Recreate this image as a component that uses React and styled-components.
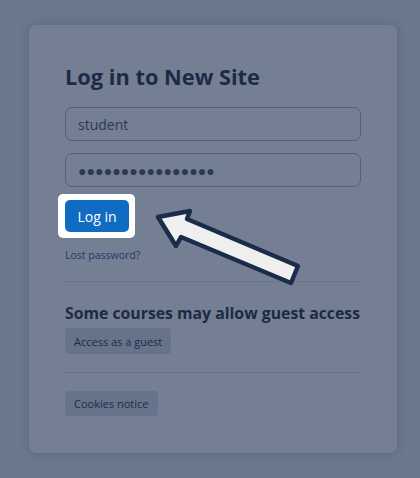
import React from "react";
import styled, { createGlobalStyle } from "styled-components";

const Global = createGlobalStyle`
  html, body { margin: 0; padding: 0; background: #6b798f; }
  body { font-family: "Open Sans", "Noto Sans", sans-serif; }
  * { box-sizing: border-box; }
`;

const Page = styled.div`
  width: 420px;
  height: 478px;
  padding: 25px 23px 0 29px;
  background: #6b798f;
  overflow: hidden;
`;

const Card = styled.div`
  position: relative;
  width: 368px;
  height: 428px;
  background: #747f93;
  border-radius: 7px;
  box-shadow: 0 0 12px rgba(40, 52, 72, 0.25);
  padding: 38px 36px 0 36px;
  display: flex;
  flex-direction: column;
`;

const Title = styled.h1`
  margin: 0 0 17px 0;
  font-size: 21.8px;
  line-height: 27px;
  font-weight: 700;
  color: #1c2b45;
`;

const Input = styled.div`
  height: 34px;
  border: 1px solid #56627a;
  border-radius: 7px;
  display: flex;
  align-items: center;
  padding: 0 12px;
  font-size: 14px;
  color: #2b3a52;
  margin-bottom: ${(p) => p.$mb || 0}px;
  letter-spacing: ${(p) => (p.$dots ? "0.1px" : "0")};
`;

const Highlight = styled.div`
  align-self: flex-start;
  margin: 7px 0 0 -7px;
  padding: 6px 6px 6px 7px;
  background: #ffffff;
  border-radius: 5px;
`;

const PrimaryButton = styled.div`
  width: 64px;
  height: 32px;
  background: #0f6cc2;
  color: #ffffff;
  border-radius: 5px;
  display: flex;
  align-items: center;
  justify-content: center;
  font-size: 14px;
`;

const LinkText = styled.div`
  margin-top: 10px;
  font-size: 10.5px;
  line-height: 14px;
  color: #1d3b66;
`;

const Divider = styled.hr`
  margin: ${(p) => p.$mt}px 0 0 0;
  border: 0;
  border-top: 1px solid #67738a;
  width: 296px;
`;

const SubTitle = styled.h2`
  margin: 21px 0 0 0;
  font-size: 15.8px;
  line-height: 20px;
  font-weight: 700;
  color: #1c2b45;
  white-space: nowrap;
`;

const SecondaryButton = styled.div`
  align-self: flex-start;
  margin-top: ${(p) => p.$mt}px;
  height: ${(p) => p.$h}px;
  padding: 0 9px;
  background: #66738a;
  border-radius: 4px;
  display: flex;
  align-items: center;
  font-size: 11px;
  color: #1f2c42;
`;

const Arrow = styled.svg`
  position: absolute;
  left: 121px;
  top: 178px;
`;

export default function App() {
  return (
    <>
      <Global />
      <Page>
        <Card>
          <Title>Log in to New Site</Title>
          <Input $mb={12}>student</Input>
          <Input $dots>●●●●●●●●●●●●●●●●</Input>
          <Highlight>
            <PrimaryButton>Log in</PrimaryButton>
          </Highlight>
          <LinkText>Lost password?</LinkText>
          <Divider $mt={19} />
          <SubTitle>Some courses may allow guest access</SubTitle>
          <SecondaryButton $mt={5} $h={26}>Access as a guest</SecondaryButton>
          <Divider $mt={18} />
          <SecondaryButton $mt={18} $h={25}>Cookies notice</SecondaryButton>
          <Arrow width="190" height="120" viewBox="150 203 190 120">
            <polygon
              points="158,217 190,211 187,219 298,266 291,283 181,237 176,246"
              fill="#efefef"
              stroke="#1b2c4a"
              strokeWidth="4.5"
              strokeLinejoin="round"
            />
          </Arrow>
        </Card>
      </Page>
    </>
  );
}
